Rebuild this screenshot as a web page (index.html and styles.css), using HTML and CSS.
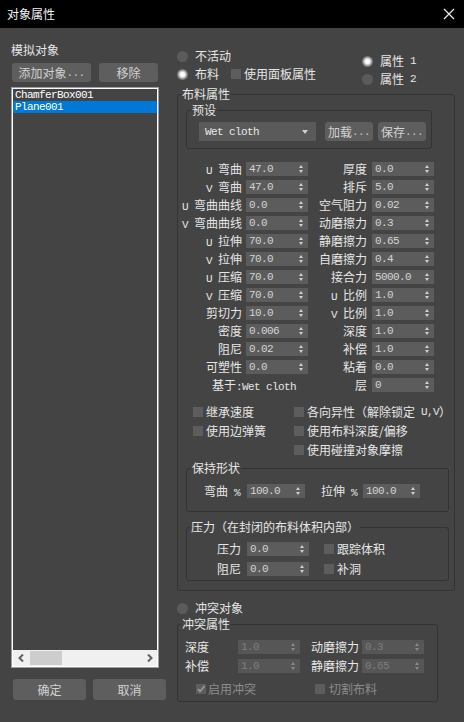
FILE: index.html
```html
<!DOCTYPE html>
<html>
<head>
<meta charset="utf-8">
<link rel="stylesheet" href="styles.css">
</head>
<body>
<div class="titlebar">
  <span class="title">对象属性</span>
  <svg class="close" width="12" height="12" viewBox="0 0 12 12"><path d="M1 1 L11 11 M11 1 L1 11" stroke="#e8e8e8" stroke-width="1.3" fill="none"/></svg>
</div>
<div class="main">
  <div class="left">
    <div class="lbl">模拟对象</div>
    <div class="btnrow">
      <div class="btn add">添加对象<span class="m">...</span></div>
      <div class="btn rm">移除</div>
    </div>
    <div class="listbox">
      <div class="lb-inner">
        <div class="items">
          <div class="item">ChamferBox001</div>
          <div class="item sel">Plane001</div>
        </div>
        <div class="hscroll">
          <svg width="6" height="8" viewBox="0 0 6 8"><path d="M5 0.5 L1.5 4 L5 7.5" stroke="#606060" stroke-width="2" fill="none"/></svg>
          <div class="thumb"></div>
          <div class="spacer"></div>
          <svg width="6" height="8" viewBox="0 0 6 8"><path d="M1 0.5 L4.5 4 L1 7.5" stroke="#606060" stroke-width="2" fill="none"/></svg>
        </div>
      </div>
    </div>
    <div class="okrow">
      <div class="btn ok">确定</div>
      <div class="btn cancel">取消</div>
    </div>
  </div>

  <div class="right">
    <div class="top">
      <div class="tcol">
        <div class="opt"><i class="radio"></i>不活动</div>
        <div class="opt"><i class="radio on"></i>布料<i class="chk panel"></i><span class="ct">使用面板属性</span></div>
      </div>
      <div class="tcol2">
        <div class="opt"><i class="radio on"></i>属性<span class="m">&nbsp;1</span></div>
        <div class="opt"><i class="radio"></i>属性<span class="m">&nbsp;2</span></div>
      </div>
    </div>

    <fieldset class="fs cloth">
      <legend>布料属性</legend>
      <fieldset class="fs preset">
        <legend>预设</legend>
        <div class="presetrow">
          <div class="dd"><span class="m">Wet cloth</span><i class="tri"></i></div>
          <div class="btn sm">加载<span class="m">...</span></div>
          <div class="btn sm">保存<span class="m">...</span></div>
        </div>
      </fieldset>

      <div class="params">
        <div class="pl"><span class="m">U&nbsp;</span>弯曲</div><div class="spin"><span>47.0</span><i class="arr"></i></div>
        <div class="pr">厚度</div><div class="spin"><span>0.0</span><i class="arr"></i></div>

        <div class="pl"><span class="m">V&nbsp;</span>弯曲</div><div class="spin"><span>47.0</span><i class="arr"></i></div>
        <div class="pr">排斥</div><div class="spin"><span>5.0</span><i class="arr"></i></div>

        <div class="pl"><span class="m">U&nbsp;</span>弯曲曲线</div><div class="spin"><span>0.0</span><i class="arr"></i></div>
        <div class="pr">空气阻力</div><div class="spin"><span>0.02</span><i class="arr"></i></div>

        <div class="pl"><span class="m">V&nbsp;</span>弯曲曲线</div><div class="spin"><span>0.0</span><i class="arr"></i></div>
        <div class="pr">动磨擦力</div><div class="spin"><span>0.3</span><i class="arr"></i></div>

        <div class="pl"><span class="m">U&nbsp;</span>拉伸</div><div class="spin"><span>70.0</span><i class="arr"></i></div>
        <div class="pr">静磨擦力</div><div class="spin"><span>0.65</span><i class="arr"></i></div>

        <div class="pl"><span class="m">V&nbsp;</span>拉伸</div><div class="spin"><span>70.0</span><i class="arr"></i></div>
        <div class="pr">自磨擦力</div><div class="spin"><span>0.4</span><i class="arr"></i></div>

        <div class="pl"><span class="m">U&nbsp;</span>压缩</div><div class="spin"><span>70.0</span><i class="arr"></i></div>
        <div class="pr">接合力</div><div class="spin"><span>5000.0</span><i class="arr"></i></div>

        <div class="pl"><span class="m">V&nbsp;</span>压缩</div><div class="spin"><span>70.0</span><i class="arr"></i></div>
        <div class="pr"><span class="m">U&nbsp;</span>比例</div><div class="spin"><span>1.0</span><i class="arr"></i></div>

        <div class="pl">剪切力</div><div class="spin"><span>10.0</span><i class="arr"></i></div>
        <div class="pr"><span class="m">V&nbsp;</span>比例</div><div class="spin"><span>1.0</span><i class="arr"></i></div>

        <div class="pl">密度</div><div class="spin"><span>0.006</span><i class="arr"></i></div>
        <div class="pr">深度</div><div class="spin"><span>1.0</span><i class="arr"></i></div>

        <div class="pl">阻尼</div><div class="spin"><span>0.02</span><i class="arr"></i></div>
        <div class="pr">补偿</div><div class="spin"><span>1.0</span><i class="arr"></i></div>

        <div class="pl">可塑性</div><div class="spin"><span>0.0</span><i class="arr"></i></div>
        <div class="pr">粘着</div><div class="spin"><span>0.0</span><i class="arr"></i></div>

        <div class="based">基于<span class="m">:Wet cloth</span></div>
        <div class="pr">层</div><div class="spin"><span>0</span><i class="arr"></i></div>
      </div>

      <div class="checks">
        <div class="ck"><i class="chk"></i>继承速度</div>
        <div class="ck"><i class="chk"></i>各向异性（解除锁定<span class="m">&nbsp;U,V</span>）</div>
        <div class="ck"><i class="chk"></i>使用边弹簧</div>
        <div class="ck"><i class="chk"></i>使用布料深度/偏移</div>
        <div class="ck"></div>
        <div class="ck"><i class="chk"></i>使用碰撞对象摩擦</div>
      </div>

      <fieldset class="fs keep">
        <legend>保持形状</legend>
        <div class="krow">
          <div class="kl">弯曲<span class="m">&nbsp;%</span></div><div class="spin w58"><span>100.0</span><i class="arr"></i></div>
          <div class="kl2">拉伸<span class="m">&nbsp;%</span></div><div class="spin w57"><span>100.0</span><i class="arr"></i></div>
        </div>
      </fieldset>

      <fieldset class="fs press">
        <legend>压力（在封闭的布料体积内部）</legend>
        <div class="prow">
          <div class="kl3">压力</div><div class="spin"><span>0.0</span><i class="arr"></i></div>
          <i class="chk pc"></i><span class="ct">跟踪体积</span>
        </div>
        <div class="prow">
          <div class="kl3">阻尼</div><div class="spin"><span>0.0</span><i class="arr"></i></div>
          <i class="chk pc"></i><span class="ct">补洞</span>
        </div>
      </fieldset>
    </fieldset>

    <div class="opt coll"><i class="radio"></i>冲突对象</div>

    <fieldset class="fs collp">
      <legend>冲突属性</legend>
      <div class="crow">
        <div class="cl">深度</div><div class="spin dis"><span>1.0</span><i class="arr"></i></div>
        <div class="cl2">动磨擦力</div><div class="spin dis"><span>0.3</span><i class="arr"></i></div>
      </div>
      <div class="crow">
        <div class="cl">补偿</div><div class="spin dis"><span>1.0</span><i class="arr"></i></div>
        <div class="cl2">静磨擦力</div><div class="spin dis"><span>0.65</span><i class="arr"></i></div>
      </div>
      <div class="cchecks">
        <div class="ck dim c1"><i class="chk"><svg width="10" height="10" viewBox="0 0 10 10"><path d="M2 5 L4 7.5 L8.5 2" stroke="#9a9a9a" stroke-width="1.6" fill="none"/></svg></i>启用冲突</div>
        <div class="ck dim c2"><i class="chk"></i>切割布料</div>
      </div>
    </fieldset>
  </div>
</div>
</body>
</html>
```

FILE: styles.css
```css
* { box-sizing: border-box; }
html, body { margin: 0; padding: 0; }
body {
  width: 464px;
  height: 722px;
  overflow: hidden;
  background: #444444;
  color: #e6e6e6;
  font-family: "Noto Sans CJK SC", sans-serif;
  font-size: 12px;
  line-height: 14px;
}
i { font-style: normal; display: block; flex: none; }
.m {
  font-family: "Liberation Mono", "Noto Sans CJK SC", monospace;
  font-size: 11px;
  letter-spacing: -0.6px;
}

.titlebar {
  height: 28px;
  background: #000;
  display: flex;
  align-items: center;
  justify-content: space-between;
  padding: 0 9px 1px 7px;
}
.title { color: #f2f2f2; font-size: 12px; }
.close { display: block; margin-top: 1px; }

.main { display: flex; padding-left: 11px; }

/* left column */
.left { width: 156px; display: flex; flex-direction: column; }
.lbl { margin-top: 15px; height: 14px; }
.btnrow { margin-top: 6px; display: flex; }
.btn {
  background: #5e5e5e;
  color: #d2d2d2;
  border-radius: 3px;
  display: flex;
  align-items: center;
  justify-content: center;
  white-space: nowrap;
}
.btn .m { color: #c8c8c8; }
.add { margin-left: 1px; width: 79px; height: 19px; }
.rm { margin-left: 8px; width: 59px; height: 19px; }
.listbox {
  margin-top: 5px;
  width: 148px;
  height: 581px;
  border: 1px solid #9a9ea4;
}
.lb-inner {
  height: 100%;
  border: 1px solid #ffffff;
  display: flex;
  flex-direction: column;
}
.items { flex: 1; background: #444; }
.item {
  height: 12px;
  line-height: 12px;
  padding-left: 2px;
  color: #fff;
  font-family: "Liberation Mono", monospace;
  font-size: 11px;
  letter-spacing: -0.6px;
}
.item.sel { background: #0078d7; }
.hscroll {
  height: 16px;
  background: #f0f0f0;
  display: flex;
  align-items: center;
  padding: 0 4px 0 5px;
}
.hscroll svg { display: block; }
.thumb { width: 32px; height: 14px; background: #cdcdcd; margin-left: 6px; }
.spacer { flex: 1; }
.okrow { margin-top: 11px; display: flex; }
.ok { margin-left: 2px; width: 73px; height: 21px; }
.cancel { margin-left: 7px; width: 73px; height: 21px; }

/* right column */
.right { margin-left: 10px; width: 278px; display: flex; flex-direction: column; }
.top { display: flex; height: 59px; }
.tcol { width: 185px; padding-top: 19px; }
.tcol2 { padding-top: 24px; }
.opt { display: flex; align-items: center; height: 18px; white-space: nowrap; }
.radio {
  width: 11px; height: 11px;
  border-radius: 50%;
  background: #5b5b5b;
  margin-right: 7px;
}
.radio.on {
  background: radial-gradient(circle, #ffffff 0, #f4f4f4 2.5px, #b8b8b8 3.5px, #7c7c7c 5px, #6a6a6a 5.5px);
}
.chk {
  width: 10px; height: 10px;
  background: #5d5d5d;
  margin-right: 3px;
}
.chk svg { display: block; }
.chk.panel { margin-left: 12px; }

.fs {
  margin: 0;
  padding: 0;
  min-width: 0;
  border: 1px solid #333333;
  border-radius: 3px;
}
.fs > legend {
  padding: 0 1px;
  margin-left: 3px;
  line-height: 14px;
  height: 14px;
  white-space: nowrap;
}
.cloth { width: 278px; padding: 2px 0 9px 0; }

.preset { margin-left: 8px; width: 246px; }
.preset > legend { margin-left: 4px; }
.presetrow { display: flex; margin-top: 5px; padding: 0 0 7px 12px; }
.dd {
  width: 117px; height: 19px;
  background: #5a5a5a;
  display: flex;
  align-items: center;
  justify-content: space-between;
  padding: 0 8px 0 6px;
  color: #e8e8e8;
}
.tri {
  width: 0; height: 0;
  border-left: 3px solid transparent;
  border-right: 3px solid transparent;
  border-top: 4px solid #d0d0d0;
}
.btn.sm { width: 48px; height: 19px; }
.dd + .btn.sm { margin-left: 9px; }
.btn.sm + .btn.sm { margin-left: 5px; }

.params {
  margin-top: 12px;
  display: grid;
  grid-template-columns: 68px 62px 64px 62px;
  grid-auto-rows: 18px;
}
.pl, .pr {
  text-align: right;
  white-space: nowrap;
  line-height: 16px;
}
.pl { padding-right: 4px; }
.pr { padding-right: 5px; }
.based { grid-column: 1 / span 2; padding-left: 34px; line-height: 16px; white-space: nowrap; }

.spin {
  width: 62px;
  height: 14px;
  margin-top: 1px;
  background: #5c5c5c;
  display: flex;
  align-items: center;
  justify-content: space-between;
  padding: 0 4px 0 3px;
  color: #d4d4d4;
  font-family: "Liberation Mono", monospace;
  font-size: 11px;
  letter-spacing: -0.6px;
  line-height: 14px;
}
.arr {
  width: 5px;
  display: flex;
  flex-direction: column;
  gap: 2px;
}
.arr::before, .arr::after {
  content: "";
  display: block;
  width: 0; height: 0;
  border-left: 2.5px solid transparent;
  border-right: 2.5px solid transparent;
}
.arr::before { border-bottom: 3px solid #cfcfcf; }
.arr::after { border-top: 3px solid #cfcfcf; }
.spin.dis { background: #565656; color: #7e7e7e; }
.spin.dis .arr::before { border-bottom-color: #8a8a8a; }
.spin.dis .arr::after { border-top-color: #8a8a8a; }

.checks {
  margin-top: 7px;
  padding-left: 15px;
  display: grid;
  grid-template-columns: 101px auto;
  grid-auto-rows: 19px;
}
.ck { display: flex; align-items: center; white-space: nowrap; }

.keep { margin: 2px 0 0 8px; width: 263px; }
.keep > legend { margin-left: 4px; }
.krow { display: flex; margin-top: 9px; padding-bottom: 11px; }
.krow .spin { margin-top: 0; }
.kl { width: 53px; text-align: right; margin-right: 7px; white-space: nowrap; }
.kl2 { width: 52px; text-align: right; margin-right: 6px; white-space: nowrap; }
.spin.w58 { width: 58px; }
.spin.w57 { width: 57px; }

.press { margin: 8px 0 0 8px; width: 263px; padding-bottom: 4px; }
.prow { display: flex; align-items: center; margin-top: 8px; height: 14px; }
.prow + .prow { margin-top: 6px; }
.prow .spin { margin-top: 0; }
.kl3 { width: 54px; text-align: right; margin-right: 6px; }
.chk.pc { margin-left: 15px; }

.coll { margin-top: 8px; }

.collp { width: 261px; padding-bottom: 7px; }
.crow { display: flex; align-items: center; height: 14px; margin-top: 9px; }
.crow + .crow { margin-top: 5px; }
.crow .spin { margin-top: 0; }
.cl { width: 60px; padding-left: 7px; }
.cl2 { width: 51px; margin-left: 11px; white-space: nowrap; }
.cchecks { display: flex; margin-top: 11px; height: 10px; align-items: center; }
.ck.dim { color: #8c8c8c; }
.c1 { margin-left: 18px; width: 119px; }
.c1 .chk { margin-right: 2px; }
.c2 .chk { margin-right: 4px; }
```
